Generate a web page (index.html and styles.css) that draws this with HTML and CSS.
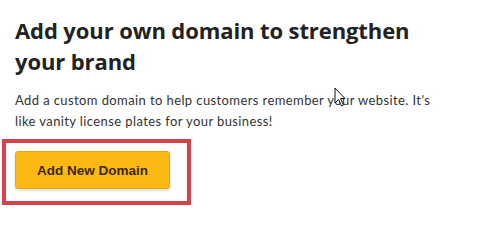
FILE: index.html
```html
<!DOCTYPE html>
<html>
<head>
<meta charset="utf-8">
<link rel="stylesheet" href="styles.css">
</head>
<body>
<main class="panel">
  <h1 class="title">Add your own domain to strengthen your brand</h1>
  <p class="desc">Add a custom domain to help customers remember your website. It's like vanity license plates for your business!</p>
  <div class="highlight">
    <button class="btn-primary">Add New Domain</button>
  </div>
</main>
<svg class="cursor" width="14" height="22" viewBox="0 0 14 22"><path d="M1 1 L1 16 L4.5 12.5 L7.5 19 L9.5 18 L6.5 11.5 L11 11.5 Z" fill="#fff" stroke="#111" stroke-width="1"/></svg>
</body>
</html>
```
FILE: styles.css
```css
html, body { margin: 0; padding: 0; background: #fff; }
body { position: relative; width: 501px; height: 250px; overflow: hidden; }
.panel { padding: 15px 0 0 15px; display: flex; flex-direction: column; align-items: flex-start; }
.title {
  margin: 0;
  width: 420px;
  font-family: "Open Sans", sans-serif;
  font-weight: 700;
  font-size: 22px;
  letter-spacing: -0.1px;
  line-height: 31px;
  color: #222;
}
.desc {
  margin: 13px 0 0;
  width: 428px;
  font-family: Lato, sans-serif;
  font-size: 13px;
  letter-spacing: 0.4px;
  line-height: 21px;
  color: #333;
}
.highlight {
  margin: 7px 0 0 -13px;
  padding: 8px 17px 12px 9px;
  border: 4px solid #d7434b;
}
.btn-primary {
  display: block;
  width: 155px;
  height: 38px;
  background: #fdb913;
  border: 1px solid #e8a60c;
  border-radius: 3px;
  box-shadow: 0 2px 3px rgba(0,0,0,0.12);
  font-family: "Liberation Sans", Arial, sans-serif;
  font-weight: 700;
  font-size: 13.5px;
  color: #3a2806;
  padding: 0;
}
.cursor { position: absolute; left: 334px; top: 87px; }
```
